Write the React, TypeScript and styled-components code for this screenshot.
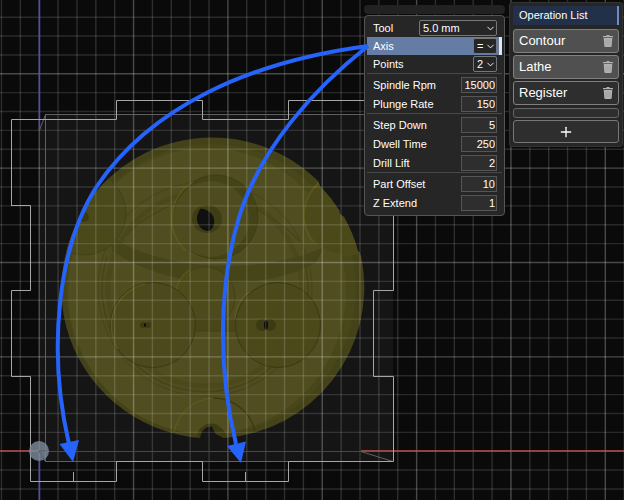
import React from "react";
import styled, { createGlobalStyle, css } from "styled-components";
import { ChevronDown, Plus } from "lucide-react";

const GlobalStyle = createGlobalStyle`
  *, *::before, *::after { box-sizing: border-box; }
  body { margin: 0; background: #0a0a0a; color: #fff; font: 11px/14px "Liberation Sans", Arial, sans-serif; }
  button, input, select { font: inherit; color: inherit; margin: 0; }
`;

const Workspace = styled.main`
  position: relative;
  display: flex;
  justify-content: flex-end;
  align-items: flex-start;
  gap: 4px;
  min-height: 100vh;
  padding: 2px 1px;
  overflow: hidden;
`;

const Canvas = styled.svg`
  position: absolute;
  inset: 0;
  width: 100%;
  height: 100%;
  pointer-events: none;
`;

const Settings = styled.section`
  position: relative;
  width: 141px;
  padding-top: 3px;
`;

const DragBar = styled.div`
  height: 9px;
  margin-bottom: 1px;
  border-radius: 4px;
  background: #222;
`;

const SettingsBody = styled.form`
  padding: 3px 2px;
  border: 1px solid #555;
  border-radius: 4px;
  background: #262626;
`;

const Group = styled.div<{ $ruled?: boolean }>`
  ${({ $ruled }) =>
    $ruled &&
    css`
      padding-top: 1px;
      border-top: 1px solid #484848;
    `}
`;

const Row = styled.div<{ $compact?: boolean; $active?: boolean }>`
  display: flex;
  align-items: center;
  justify-content: space-between;
  height: ${({ $compact }) => ($compact ? 18 : 19)}px;
  padding: 0 2px 0 6px;
  border-right: 3px solid ${({ $active }) => ($active ? "#dce8fa" : "transparent")};
  background: ${({ $active }) => ($active ? "#657da5" : "transparent")};
  background-clip: padding-box;
`;

const Picker = styled.span`
  display: grid;
  align-items: center;

  > * {
    grid-area: 1 / 1;
  }

  svg {
    justify-self: end;
    margin-right: 1px;
    pointer-events: none;
  }
`;

const Select = styled.select<{ $size: "wide" | "small" }>`
  appearance: none;
  width: ${({ $size }) => ($size === "wide" ? 78 : 24)}px;
  height: 16px;
  padding: 0 3px;
  border: 1px solid #777;
  border-radius: 2px;
  background: #262626;
  line-height: 14px;
`;

const NumberBox = styled.input`
  width: 36px;
  height: 16px;
  padding: 0 1px;
  border: 1px solid #555;
  border-radius: 0;
  background: #2e2e2e;
  text-align: right;
`;

const Operations = styled.aside`
  position: relative;
  display: flex;
  flex-direction: column;
  gap: 2px;
  width: 114px;
  padding: 3px;
  border: 1px solid #333;
  border-radius: 3px;
  background: #262626;
`;

const Title = styled.h2`
  height: 19px;
  margin: 0 0 2px;
  padding-left: 6px;
  border-right: 2px solid #6c8dc4;
  background: #22304a;
  font-size: 11px;
  font-weight: 400;
  line-height: 19px;
`;

const OperationItems = styled.ul`
  display: grid;
  gap: 2px;
  margin: 0 0 1px;
  padding: 0;
  list-style: none;
`;

const Operation = styled.li<{ $done: boolean }>`
  display: flex;
  height: 24px;
  border: 1px solid #808080;
  border-radius: 3px;
  background: ${({ $done }) => ($done ? "#505050" : "#2e2e2e")};
`;

const OperationName = styled.button`
  flex: 1;
  padding: 0 0 0 5px;
  border: 0;
  background: none;
  font-size: 13px;
  text-align: left;
`;

const DeleteButton = styled.button`
  display: grid;
  place-items: center;
  width: 20px;
  padding: 0;
  border: 0;
  background: none;
`;

const Spacer = styled.div`
  height: 10px;
  border: 1px solid #666;
  border-radius: 3px;
  background: #2e2e2e;
`;

const AddButton = styled.button`
  display: grid;
  place-items: center;
  height: 23px;
  padding: 0;
  border: 1px solid #777;
  border-radius: 3px;
  background: #2e2e2e;
`;

const pickers = [
  { id: "tool", label: "Tool", value: "5.0 mm", size: "wide" as const },
  { id: "axis", label: "Axis", value: "=", size: "small" as const, active: true },
  { id: "points", label: "Points", value: "2", size: "small" as const },
];

const numberGroups = [
  [["Spindle Rpm", "15000"], ["Plunge Rate", "150"]],
  [["Step Down", "5"], ["Dwell Time", "250"], ["Drill Lift", "2"]],
  [["Part Offset", "10"], ["Z Extend", "1"]],
];

const operations = [
  { name: "Contour", done: true },
  { name: "Lathe", done: true },
  { name: "Register", done: false },
];

const ORIGIN = { x: 39.2, y: 451.2 };
const STEP = 18.87;

function Grid() {
  const lines: React.ReactNode[] = [];
  for (let i = -2; i < 80; i++) {
    const x = ORIGIN.x + i * STEP;
    lines.push(
      <path key={`v${i}`} d={`M${x} 0V1600`} stroke="#fff" strokeOpacity={i % 5 === 0 ? 0.26 : 0.15} />
    );
  }
  for (let i = -50; i < 24; i++) {
    if (i === 0) continue;
    const y = ORIGIN.y + i * STEP;
    lines.push(
      <path key={`h${i}`} d={`M0 ${y}H1600`} stroke="#fff" strokeOpacity={i % 5 === 0 ? 0.26 : 0.13} />
    );
  }
  return <g strokeWidth="1.4">{lines}</g>;
}

function Part() {
  return (
    <g>
      <clipPath id="body">
        <path d="M200 438A151 151 0 0 1 66 326A151 151 0 0 1 80 217L83 210A151 151 0 0 1 318 181L320 186A151 151 0 0 1 339 210L340 214L344 217A151 151 0 0 1 358 251Q361 253 362 261A151 151 0 0 1 224 438L216 434L212 426C206 426 201 429 200 438Z" />
      </clipPath>
      <g clipPath="url(#body)">
        <rect x="55" y="130" width="315" height="315" fill="#434218" />
        <ellipse cx="211" cy="289" rx="145" ry="145" fill="#48471a" />
        <ellipse cx="207" cy="291" rx="139" ry="143" fill="#504e20" />
        <g fill="none">
          <circle cx="205" cy="289" r="107" stroke="#49481c" strokeWidth="1.500" />
          <circle cx="205" cy="289" r="97" stroke="#4b491b" strokeWidth="5" />
          <path d="M107 257A103 103 0 1 0 303 257" stroke="#474518" strokeWidth="1.500" />
        </g>
        <path d="M110 236C168 274 267 274 324 247L316 263C263 291 174 292 112 251Z" fill="#464519" />
        <path d="M122 238Q211 155 300 241" fill="none" stroke="#474619" strokeWidth="1.500" />
        <g>
          <circle cx="84" cy="213" r="42" fill="#4a491b" stroke="#434216" />
          <circle cx="346" cy="213" r="42" fill="#4b491a" stroke="#504f1a" />
          <circle cx="216" cy="217" r="42" fill="#444317" stroke="#3e3d14" />
          <circle cx="211" cy="219" r="38" fill="#4e4c1f" />
        </g>
        <circle cx="205" cy="297" r="30" fill="#4d4b1c" stroke="#434216" />
        <path d="M176 300A30 30 0 0 1 190 270" fill="none" stroke="#5d5c1d" strokeWidth="1.200" />
        <path d="M190 319H240V331H190Z" fill="#494719" stroke="#403f16" />
        <circle cx="153" cy="325" r="42.500" fill="#4c4a1c" stroke="#3a3914" />
        <circle cx="278" cy="325" r="42.500" fill="#4b491a" stroke="#3a3914" />
        <g fill="none" stroke="#5d5c1c" strokeWidth="1.200">
          <path d="M118 349A43 43 0 0 1 145 284" />
          <path d="M235 318Q238 298 250 292" />
          <path d="M186 251A43 43 0 0 1 193 182" />
          <path d="M313 242A43 43 0 0 1 319 183" />
          <path d="M174 432A43 43 0 0 1 213 398" />
        </g>
        <path d="M213 398A43 43 0 0 1 255 431" fill="none" stroke="#3d3c12" strokeWidth="1.500" />
        <path d="M197 439C197 423 214 420 220 427C226 431 227 438 227 444H197Z" fill="#3b3a12" />
        <ellipse cx="207" cy="219" rx="15" ry="14" fill="#3e3d14" />
        <path d="M200 209C205 208 213 213 214 219C215 225 212 231 208 231C201 231 196 224 197 216Z" fill="#101010" />
        <g fill="#3b3a12">
          <circle cx="143" cy="325" r="3" />
          <circle cx="148" cy="325" r="3" />
          <circle cx="262" cy="325" r="6" />
          <circle cx="270" cy="325" r="6" />
          <circle cx="84" cy="217" r="5" />
        </g>
        <ellipse cx="145" cy="325" rx="1" ry="2" fill="#0c0c0c" />
        <ellipse cx="266" cy="325" rx="2" ry="4.500" fill="#0c0c0c" />
      </g>
    </g>
  );
}

function Scene() {
  return (
    <Canvas viewBox="0 0 624 500" preserveAspectRatio="xMidYMin slice" role="img" aria-label="Part preview with registration points">
      <path d="M39 130L45 115H393V462H45L39 451Z" fill="#151515" />
      <Part />
      <Grid />
      <path d="M39 451.500H361" stroke="#484848" />
      <path d="M39.500 0V130M39.500 451V500" stroke="#4c4cc4" strokeWidth="1.500" />
      <path d="M0 451H39M361 451H1600" stroke="#bd5558" strokeWidth="1.500" />
      <g fill="none" stroke="#606060">
        <path d="M39.500 130L45.500 114.500H393M45.500 114.500V461.500" />
        <path d="M361 451.500L393 461.500H45.500L39 451" />
      </g>
      <g fill="none" stroke="#a6a6a6">
        <path d="M11.500 205.500V119.500H116.500V100.500H202.500V119.500H288.500V100.500H373.500V119.500H393.500V290.500H373.500V376.500H393.500V461.500H288.500V481.500H202.500V461.500H116.500V481.500H30.500V376.500H11.500V290.500H30.500V205.500H11" />
        <path d="M73.500 472V481M245.500 472V481" />
      </g>
      <circle cx="39" cy="451" r="10" fill="#7d8c9b" fillOpacity=".8" />
      <path d="M39 451H46M39 451L45 461" stroke="#555d65" fill="none" />
    </Canvas>
  );
}

function Pointers() {
  return (
    <Canvas viewBox="0 0 624 500" preserveAspectRatio="xMidYMin slice" aria-hidden="true">
      <g fill="none" stroke="#2563fb" strokeWidth="4">
        <path d="M368 46C247 62 150 108 97 186C58 246 47 350 69 444" />
        <path d="M368 46C312 90 261 149 240 214C218 285 218 370 236 444" />
      </g>
      <g fill="#2563fb">
        <path d="M59.500 444L79 440L73 462Z" />
        <path d="M227 446L246 441.500L241 463Z" />
      </g>
    </Canvas>
  );
}

function TrashIcon() {
  return (
    <svg width="10" height="12" viewBox="0 0 10 12" aria-hidden="true">
      <path d="M0 1H3L4 0H6L7 1H10V2.300H0ZM.7 3H9.300L8.700 11Q8.600 12 7.600 12H2.400Q1.400 12 1.300 11Z" fill="#b0b0b0" />
      <path d="M3 5V10M5 5V10M7 5V10" stroke="#9c9c9c" strokeWidth=".6" />
    </svg>
  );
}

export default function App() {
  return (
    <Workspace>
      <GlobalStyle />
      <Scene />
      <Settings aria-label="Operation settings">
        <DragBar />
        <SettingsBody>
          <Group>
            {pickers.map((p) => (
              <Row key={p.id} $compact $active={p.active}>
                <label htmlFor={p.id}>{p.label}</label>
                <Picker>
                  <Select id={p.id} $size={p.size} defaultValue={p.value}>
                    <option>{p.value}</option>
                  </Select>
                  <ChevronDown size={11} strokeWidth={2} />
                </Picker>
              </Row>
            ))}
          </Group>
          {numberGroups.map((group) => (
            <Group key={group[0][0]} $ruled>
              {group.map(([label, value]) => (
                <Row key={label}>
                  <label htmlFor={label.replace(" ", "-")}>{label}</label>
                  <NumberBox id={label.replace(" ", "-")} inputMode="numeric" defaultValue={value} />
                </Row>
              ))}
            </Group>
          ))}
        </SettingsBody>
      </Settings>
      <Operations>
        <Title>Operation List</Title>
        <OperationItems>
          {operations.map((op) => (
            <Operation key={op.name} $done={op.done}>
              <OperationName type="button">{op.name}</OperationName>
              <DeleteButton type="button" aria-label={`Delete ${op.name}`}>
                <TrashIcon />
              </DeleteButton>
            </Operation>
          ))}
        </OperationItems>
        <Spacer />
        <AddButton type="button" aria-label="Add operation">
          <Plus size={16} strokeWidth={2} />
        </AddButton>
      </Operations>
      <Pointers />
    </Workspace>
  );
}
